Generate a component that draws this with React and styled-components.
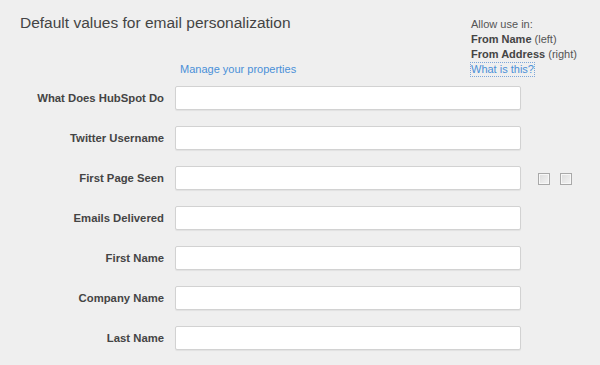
import React from "react";
import styled, { createGlobalStyle } from "styled-components";

const Global = createGlobalStyle`
  html, body { margin: 0; padding: 0; background: #efefef; }
  body { font-family: "Liberation Sans", Arial, sans-serif; color: #444; }
`;

const Page = styled.div`
  width: 600px;
  height: 365px;
  overflow: hidden;
  background: #efefef;
`;

const Top = styled.div`
  display: grid;
  grid-template-columns: 471px 1fr;
  padding-top: 13px;
  margin-bottom: 9px;
`;

const LeftHead = styled.div`
  display: flex;
  flex-direction: column;
  justify-content: space-between;
`;

const Title = styled.h1`
  margin: 0 0 0 20px;
  font-size: 15.5px;
  line-height: 20px;
  font-weight: normal;
  color: #444;
`;

const Link = styled.a`
  color: #4a8fd8;
  font-size: 11px;
  line-height: 15px;
  text-decoration: none;
  cursor: pointer;
  ${(p) => (p.$dotted ? "outline: 1px dotted #7da7d9; outline-offset: -1px; padding: 0 1px; margin-left: -1px;" : "")}
`;

const ManageLink = styled(Link)`
  margin-left: 180px;
  align-self: flex-start;
`;

const Info = styled.div`
  padding-top: 4px;
  font-size: 11px;
  line-height: 15px;
  color: #555;
  display: flex;
  flex-direction: column;
  align-items: flex-start;
`;

const Strong = styled.b`
  color: #444;
`;

const Form = styled.div`
  display: flex;
  flex-direction: column;
  gap: 16px;
`;

const Row = styled.div`
  display: grid;
  grid-template-columns: 164px 346px auto;
  column-gap: 11px;
  align-items: center;
  height: 24px;
`;

const Label = styled.label`
  text-align: right;
  font-size: 11.3px;
  font-weight: bold;
  color: #444;
  white-space: nowrap;
`;

const Field = styled.input`
  box-sizing: border-box;
  width: 346px;
  height: 24px;
  margin: 0;
  border: 1px solid #d2d2d2;
  border-radius: 2px;
  background: #fff;
  box-shadow: 0 1px 1px rgba(0, 0, 0, 0.06);
  outline: none;
`;

const Checks = styled.div`
  display: flex;
  gap: 10px;
  padding-left: 6px;
  padding-top: 2px;
`;

const Check = styled.input.attrs({ type: "checkbox" })`
  appearance: none;
  -webkit-appearance: none;
  margin: 0;
  width: 12px;
  height: 12px;
  box-sizing: border-box;
  border: 1px solid #a9a9a9;
  background: linear-gradient(135deg, #dcdcdc 0%, #f4f4f4 100%);
  box-shadow: inset 0 0 0 1px #f7f7f7;
`;

const fields = [
  { label: "What Does HubSpot Do" },
  { label: "Twitter Username" },
  { label: "First Page Seen", checks: true },
  { label: "Emails Delivered" },
  { label: "First Name" },
  { label: "Company Name" },
  { label: "Last Name" },
];

export default function App() {
  return (
    <Page>
      <Global />
      <Top>
        <LeftHead>
          <Title>Default values for email personalization</Title>
          <ManageLink>Manage your properties</ManageLink>
        </LeftHead>
        <Info>
          <span>Allow use in:</span>
          <span>
            <Strong>From Name</Strong> (left)
          </span>
          <span>
            <Strong>From Address</Strong> (right)
          </span>
          <Link $dotted>What is this?</Link>
        </Info>
      </Top>
      <Form>
        {fields.map((f) => (
          <Row key={f.label}>
            <Label>{f.label}</Label>
            <Field type="text" />
            {f.checks ? (
              <Checks>
                <Check />
                <Check />
              </Checks>
            ) : (
              <span />
            )}
          </Row>
        ))}
      </Form>
    </Page>
  );
}
